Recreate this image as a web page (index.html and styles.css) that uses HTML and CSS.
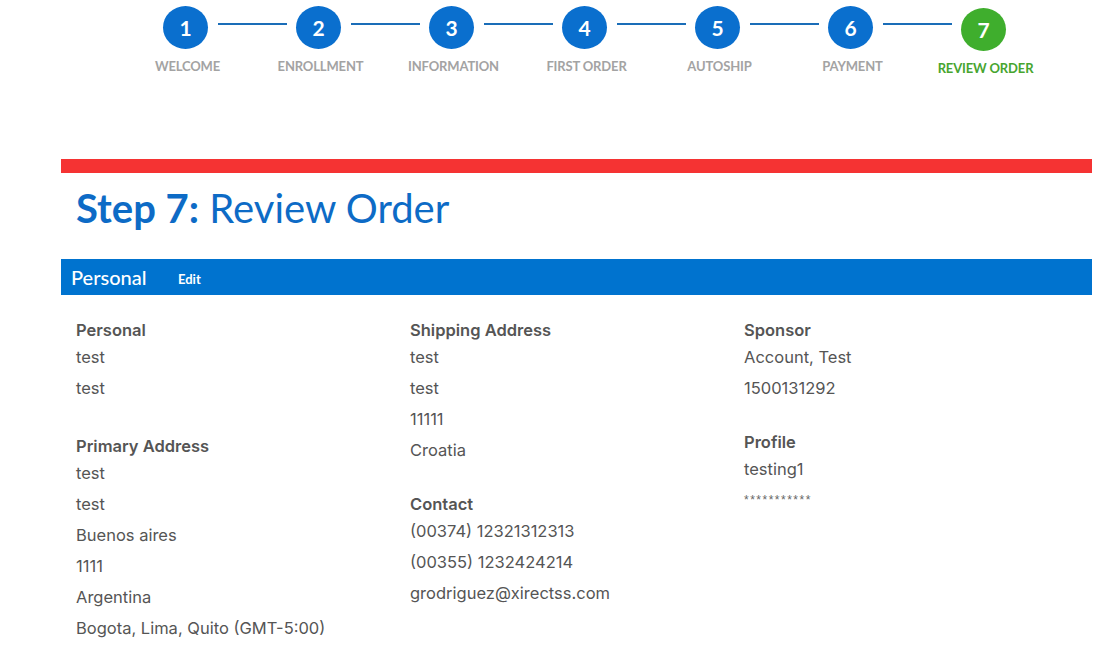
FILE: index.html
```html
<!DOCTYPE html>
<html lang="en">
<head>
<meta charset="utf-8">
<title>Step 7: Review Order</title>
<link rel="stylesheet" href="styles.css">
</head>
<body>
<nav class="stepper">
  <div class="stepper-circles">
    <span class="circle">1</span><span class="connector"></span>
    <span class="circle">2</span><span class="connector"></span>
    <span class="circle">3</span><span class="connector"></span>
    <span class="circle">4</span><span class="connector"></span>
    <span class="circle">5</span><span class="connector"></span>
    <span class="circle">6</span><span class="connector"></span>
    <span class="circle circle-active">7</span>
  </div>
  <div class="stepper-labels">
    <span class="label">Welcome</span>
    <span class="label">Enrollment</span>
    <span class="label">Information</span>
    <span class="label">First Order</span>
    <span class="label">Autoship</span>
    <span class="label">Payment</span>
    <span class="label label-active">Review Order</span>
  </div>
</nav>

<main class="content">
  <div class="red-bar"></div>
  <h1 class="title"><strong>Step 7:</strong> Review Order</h1>

  <div class="section-bar">
    <span class="section-title">Personal</span>
    <a class="section-edit" href="#">Edit</a>
  </div>

  <div class="columns">
    <div class="column">
      <div class="group group-wide">
        <div class="group-head">Personal</div>
        <div class="row">test</div>
        <div class="row">test</div>
      </div>
      <div class="group">
        <div class="group-head">Primary Address</div>
        <div class="row">test</div>
        <div class="row">test</div>
        <div class="row">Buenos aires</div>
        <div class="row">1111</div>
        <div class="row">Argentina</div>
        <div class="row">Bogota, Lima, Quito (GMT-5:00)</div>
      </div>
    </div>
    <div class="column">
      <div class="group">
        <div class="group-head">Shipping Address</div>
        <div class="row">test</div>
        <div class="row">test</div>
        <div class="row">11111</div>
        <div class="row">Croatia</div>
      </div>
      <div class="group">
        <div class="group-head">Contact</div>
        <div class="row">(00374) 12321312313</div>
        <div class="row">(00355) 1232424214</div>
        <div class="row">grodriguez@xirectss.com</div>
      </div>
    </div>
    <div class="column">
      <div class="group">
        <div class="group-head">Sponsor</div>
        <div class="row">Account, Test</div>
        <div class="row">1500131292</div>
      </div>
      <div class="group">
        <div class="group-head">Profile</div>
        <div class="row">testing1</div>
        <div class="row row-small">***********</div>
      </div>
    </div>
  </div>
</main>
</body>
</html>
```

FILE: styles.css
```css
* { box-sizing: border-box; }

html, body {
  margin: 0;
  padding: 0;
  background: #fff;
  font-family: Lato, "Liberation Sans", Arial, sans-serif;
  color: #555;
}

.stepper {
  padding: 6px 0 0 118px;
}

.stepper-circles {
  display: flex;
  align-items: flex-start;
  padding-left: 45px;
}

.circle {
  width: 45px;
  height: 43px;
  border-radius: 50%;
  background: #0a6fce;
  color: #fff;
  font-weight: 700;
  font-size: 21px;
  display: flex;
  align-items: center;
  justify-content: center;
  flex: none;
}

.circle-active {
  background: #3fae2d;
  margin-top: 2px;
}

.connector {
  width: 69px;
  height: 2px;
  background: #1a6db8;
  margin: 17px 9px 0 10px;
  flex: none;
}

.stepper-labels {
  display: flex;
  margin-top: 7px;
  padding-left: 3px;
}

.label {
  width: 133px;
  text-align: center;
  font-size: 13px;
  font-weight: 700;
  color: #a3a3a3;
  text-transform: uppercase;
  letter-spacing: -0.15px;
  line-height: 16px;
}

.label-active {
  color: #47a52f;
  padding-top: 2px;
}

.content {
  margin: 83px 19px 0 61px;
}

.red-bar {
  height: 14px;
  background: #f53333;
}

.title {
  margin: 0;
  padding: 13px 0 0 15px;
  height: 86px;
  font-size: 40px;
  line-height: 44px;
  font-weight: 400;
  color: #0d6bc6;
}

.title strong { font-weight: 700; }

.section-bar {
  height: 36px;
  background: #0073cf;
  display: flex;
  align-items: center;
  padding-left: 10px;
  color: #fff;
}

.section-title {
  font-size: 20px;
  font-weight: 500;
  width: 107px;
}

.section-edit {
  color: #fff;
  text-decoration: none;
  font-size: 13px;
  font-weight: 700;
  padding-top: 3px;
}

.columns {
  display: grid;
  grid-template-columns: 334px 334px 334px;
  padding: 24px 0 0 15px;
  font-family: Inter, "Liberation Sans", Arial, sans-serif;
}

.group {
  margin-bottom: 27px;
}

.group-wide {
  margin-bottom: 31px;
}

.group-head {
  font-size: 16.5px;
  font-weight: 600;
  line-height: 23px;
  color: #555;
}

.row {
  font-size: 16.5px;
  line-height: 31px;
  color: #555;
}

.row-small {
  font-family: "Liberation Sans", Arial, sans-serif;
  font-size: 12px;
  letter-spacing: 1.5px;
  line-height: 30px;
  color: #666;
}
```
